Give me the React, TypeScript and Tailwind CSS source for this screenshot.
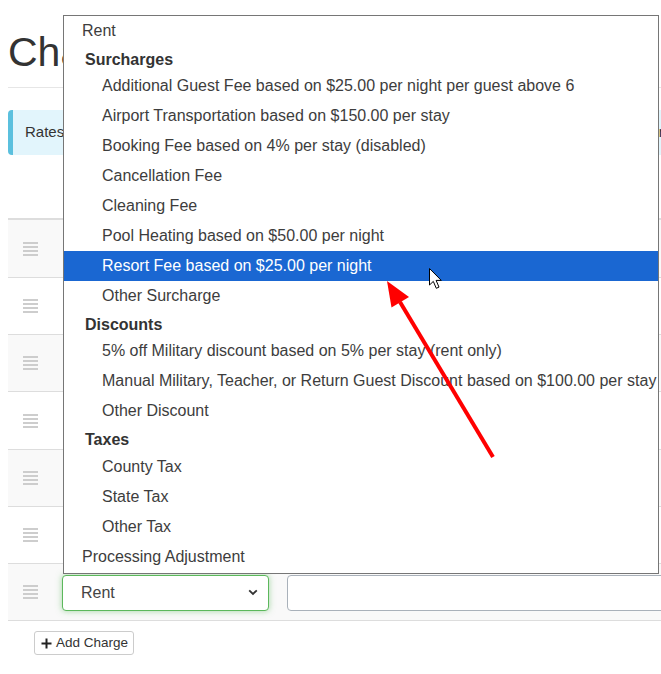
import React from "react";

type Item = { kind: "opt" | "label"; text: string; indent?: boolean; active?: boolean; tall?: boolean };

const items: Item[] = [
  { kind: "opt", text: "Rent" },
  { kind: "label", text: "Surcharges" },
  { kind: "opt", indent: true, text: "Additional Guest Fee based on $25.00 per night per guest above 6" },
  { kind: "opt", indent: true, text: "Airport Transportation based on $150.00 per stay" },
  { kind: "opt", indent: true, text: "Booking Fee based on 4% per stay (disabled)" },
  { kind: "opt", indent: true, text: "Cancellation Fee" },
  { kind: "opt", indent: true, text: "Cleaning Fee" },
  { kind: "opt", indent: true, text: "Pool Heating based on $50.00 per night" },
  { kind: "opt", indent: true, active: true, text: "Resort Fee based on $25.00 per night" },
  { kind: "opt", indent: true, text: "Other Surcharge" },
  { kind: "label", text: "Discounts" },
  { kind: "opt", indent: true, text: "5% off Military discount based on 5% per stay (rent only)" },
  { kind: "opt", indent: true, text: "Manual Military, Teacher, or Return Guest Discount based on $100.00 per stay" },
  { kind: "opt", indent: true, text: "Other Discount" },
  { kind: "label", text: "Taxes", tall: true },
  { kind: "opt", indent: true, text: "County Tax" },
  { kind: "opt", indent: true, text: "State Tax" },
  { kind: "opt", indent: true, text: "Other Tax" },
  { kind: "opt", text: "Processing Adjustment" },
];

function Handle() {
  return (
    <div className="flex w-[15px] flex-col gap-[2px]">
      <div className="h-[2px] bg-[#cdcdcd]" />
      <div className="h-[2px] bg-[#cdcdcd]" />
      <div className="h-[2px] bg-[#cdcdcd]" />
      <div className="h-[2px] bg-[#cdcdcd]" />
    </div>
  );
}

function Row({ striped, last, tall }: { striped: boolean; last?: boolean; tall?: boolean }) {
  return (
    <div
      className={
        "flex items-center border-b border-[#dddddd] " +
        (tall ? "h-[58px] " : "h-[57px] ") +
        (striped ? "bg-[#f9f9f9]" : "bg-white")
      }
    >
      <div className="flex w-[54px] shrink-0 pl-[15px]">
        <Handle />
      </div>
      {last && (
        <>
          <div className="mt-[1px] flex h-[36px] w-[207px] shrink-0 items-center justify-between rounded-[4px] border border-[#5cb85c] bg-white pl-[18px] pr-[10px] text-[16px] text-[#444] shadow-[0_0_6px_rgba(92,184,92,0.55)]">
            <span>Rent</span>
            <svg width="10" height="7" viewBox="0 0 10 7">
              <path d="M1.2 1.3 L5 5 L8.8 1.3" fill="none" stroke="#333" strokeWidth="1.8" />
            </svg>
          </div>
          <div className="ml-[18px] mt-[1px] h-[36px] w-[420px] shrink-0 rounded-[4px] border border-[#a9b1ba] bg-white" />
        </>
      )}
    </div>
  );
}

export default function App() {
  return (
    <div className="relative h-[674px] w-[661px] overflow-hidden bg-white font-['Liberation_Sans',Arial,sans-serif] text-[#333]">
      <div className="w-[940px] pl-[8px]">
        <h1 className="mt-[30px] text-[41px] font-normal leading-[44px] text-[#333]">Charges</h1>
        <div className="mt-[13px] h-px bg-[#e6e6e6]" />
        <div className="mt-[22px] flex h-[45px] items-center rounded-[4px] border-l-[5px] border-[#5bc0de] bg-[#e2f5fc] pl-[12px] text-[15px] text-[#333]">
          Rates and charges below are calculated automatically based on the reservation dates, guests and fees =
        </div>
        <div className="h-[65px] border-b-2 border-[#dddddd]" />
        <Row striped tall />
        <Row striped={false} />
        <Row striped />
        <Row striped={false} tall />
        <Row striped />
        <Row striped={false} />
        <Row striped last />
        <div className="ml-[26px] mt-[10px] flex h-[24px] w-[100px] items-center rounded-[3px] border border-[#cccccc] bg-white pl-[6px] text-[13.5px] text-[#333]">
          <svg width="11" height="11" viewBox="0 0 11 11" className="mr-[4px]">
            <path d="M5.5 0.5 V10.5 M0.5 5.5 H10.5" stroke="#222" strokeWidth="2" />
          </svg>
          <span>Add Charge</span>
        </div>
      </div>

      {/* open select dropdown */}
      <div className="absolute left-[63px] top-[15px] w-[596px] border border-[#767676] bg-white pb-[1px] text-[16px] text-[#3d3d3d]">
        {items.map((it, i) =>
          it.kind === "label" ? (
            <div
              key={i}
              className={
                "whitespace-nowrap pl-[21px] pt-[2px] font-bold leading-[23px] text-[#333] " +
                (it.tall ? "h-[26px]" : "h-[25px]")
              }
            >
              {it.text}
            </div>
          ) : (
            <div
              key={i}
              className={
                "h-[30px] whitespace-nowrap leading-[30px] " +
                (it.indent ? "pl-[38px] " : "pl-[18px] ") +
                (it.active ? "bg-[#1a67d2] text-white" : "")
              }
            >
              {it.text}
            </div>
          )
        )}
      </div>

      {/* annotation overlay: red arrow + mouse cursor */}
      <svg className="pointer-events-none absolute left-0 top-0" width="661" height="674" viewBox="0 0 661 674">
        <line x1="493" y1="457" x2="400" y2="302" stroke="#ff0000" strokeWidth="4" />
        <polygon points="387,281 409,297 391.5,307.5" fill="#ff0000" />
        <path
          d="M429.5 268.5 L429.5 285 L433.3 281.4 L436.3 288.3 L439 287.1 L436.1 280.4 L441.3 280.4 Z"
          fill="#ffffff"
          stroke="#000000"
          strokeWidth="1"
          strokeLinejoin="round"
        />
      </svg>
    </div>
  );
}
